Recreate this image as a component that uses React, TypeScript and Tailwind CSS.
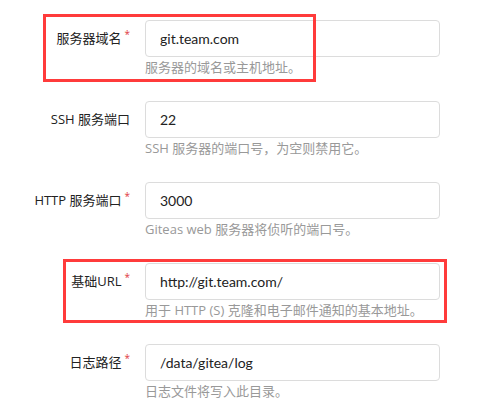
import React from 'react';

type Field = {
  label: string;
  required: boolean;
  value: string;
  help: string;
};

const fields: Field[] = [
  { label: '服务器域名', required: true, value: 'git.team.com', help: '服务器的域名或主机地址。' },
  { label: 'SSH 服务端口', required: false, value: '22', help: 'SSH 服务器的端口号，为空则禁用它。' },
  { label: 'HTTP 服务端口', required: true, value: '3000', help: 'Giteas web 服务器将侦听的端口号。' },
  { label: '基础URL', required: true, value: 'http://git.team.com/', help: '用于 HTTP (S) 克隆和电子邮件通知的基本地址。' },
  { label: '日志路径', required: true, value: '/data/gitea/log', help: '日志文件将写入此目录。' },
];

const FormRow: React.FC<{ field: Field }> = ({ field }) => (
  <div className="flex items-start mb-[24px]">
    <label className="w-[130px] shrink-0 h-[37px] flex items-center justify-end text-[13px] text-[#222] font-['Open_Sans','Noto_Sans_CJK_SC',sans-serif]">
      {field.label}
      {field.required && <span className="text-[#e0393e] text-[10px] leading-none ml-[3px] -mt-[9px]">*</span>}
    </label>
    <div className="ml-[15px] w-[295px]">
      <input
        type="text"
        defaultValue={field.value}
        className="w-full h-[37px] border border-[#dcdcdc] rounded-[4px] px-[14px] text-[14px] text-[#222] bg-white focus:outline-none"
      />
      <p className="text-[13px] leading-[20px] text-[#999] whitespace-nowrap font-['Open_Sans','Noto_Sans_CJK_SC',sans-serif]">
        {field.help}
      </p>
    </div>
  </div>
);

export default function App() {
  return (
    <div
      className="relative w-[478px] h-[413px] bg-white overflow-hidden pt-[20px]"
      style={{ fontFamily: 'Lato, "Noto Sans CJK SC", sans-serif' }}
    >
      {fields.map((f) => (
        <FormRow key={f.label} field={f} />
      ))}
      {/* annotation boxes */}
      <div className="absolute left-[43px] top-[14px] w-[273px] h-[68px] border-[3px] border-[#ff3b3b] pointer-events-none" />
      <div className="absolute left-[63px] top-[259px] w-[384px] h-[64px] border-[3px] border-[#ff3b3b] pointer-events-none" />
    </div>
  );
}
